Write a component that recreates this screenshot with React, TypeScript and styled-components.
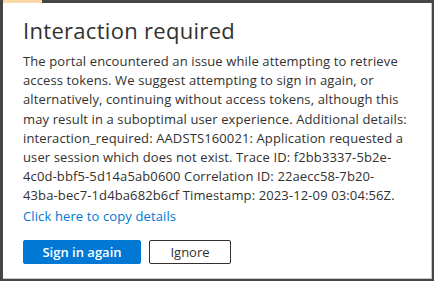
import React from "react";
import styled, { createGlobalStyle } from "styled-components";

const Global = createGlobalStyle`
  html, body { margin: 0; padding: 0; }
  body {
    background: #464646;
    width: 434px;
    height: 281px;
    overflow: hidden;
    font-family: "Open Sans", "Noto Sans", Arial, sans-serif;
  }
`;

const Backdrop = styled.div`
  display: flex;
  flex-direction: column;
  width: 434px;
  height: 281px;
`;

const TopStrip = styled.div`
  display: flex;
  height: 3px;
  padding-left: 3px;
`;

const Highlight = styled.div`
  width: 39px;
  background: #fcd8a9;
`;

const Dialog = styled.div`
  margin-left: 3px;
  width: 428px;
  height: 275px;
  background: #ffffff;
  border-right: 1px solid #c8c8c8;
  border-bottom: 1px solid #c8c8c8;
  box-sizing: content-box;
  display: flex;
  flex-direction: column;
`;

const Inner = styled.div`
  padding: 13px 20px 0 20px;
  display: flex;
  flex-direction: column;
`;

const Title = styled.h1`
  margin: 0;
  font-size: 22px;
  font-weight: 500;
  line-height: 29px;
  letter-spacing: 0.3px;
  color: #323130;
`;

const Body = styled.p`
  margin: 7px 0 0 0;
  font-size: 13px;
  line-height: 19.2px;
  letter-spacing: 0.12px;
  color: #323130;
`;

const Link = styled.a`
  margin-top: 1px;
  font-size: 13px;
  line-height: 19px;
  letter-spacing: 0.12px;
  color: #0078d4;
  text-decoration: none;
  cursor: pointer;
`;

const Actions = styled.div`
  display: flex;
  gap: 8px;
  margin-top: 14px;
`;

const Button = styled.button<{ $primary?: boolean }>`
  height: 24px;
  box-sizing: border-box;
  padding: 0 16px;
  font-family: inherit;
  font-size: 13px;
  font-weight: ${(p) => (p.$primary ? 600 : 400)};
  border-radius: 2px;
  border: 1px solid ${(p) => (p.$primary ? "#0078d4" : "#323130")};
  background: ${(p) => (p.$primary ? "#0078d4" : "#ffffff")};
  color: ${(p) => (p.$primary ? "#ffffff" : "#323130")};
  width: ${(p) => (p.$primary ? "118px" : "82px")};
`;

export default function App() {
  return (
    <>
      <Global />
      <Backdrop>
        <TopStrip>
          <Highlight />
        </TopStrip>
        <Dialog>
          <Inner>
            <Title>Interaction required</Title>
            <Body>
              The portal encountered an issue while attempting to retrieve access tokens. We suggest
              attempting to sign in again, or alternatively, continuing without access tokens,
              although this may result in a suboptimal user experience. Additional details:
              interaction_required: AADSTS160021: Application requested a user session which does
              not exist. Trace ID: f2bb3337-5b2e-4c0d-bbf5-5d14a5ab0600 Correlation ID:
              22aecc58-7b20-
              <br />
              43ba-bec7-1d4ba682b6cf Timestamp: 2023-12-09 03:04:56Z.
            </Body>
            <Link>Click here to copy details</Link>
            <Actions>
              <Button $primary>Sign in again</Button>
              <Button>Ignore</Button>
            </Actions>
          </Inner>
        </Dialog>
      </Backdrop>
    </>
  );
}
